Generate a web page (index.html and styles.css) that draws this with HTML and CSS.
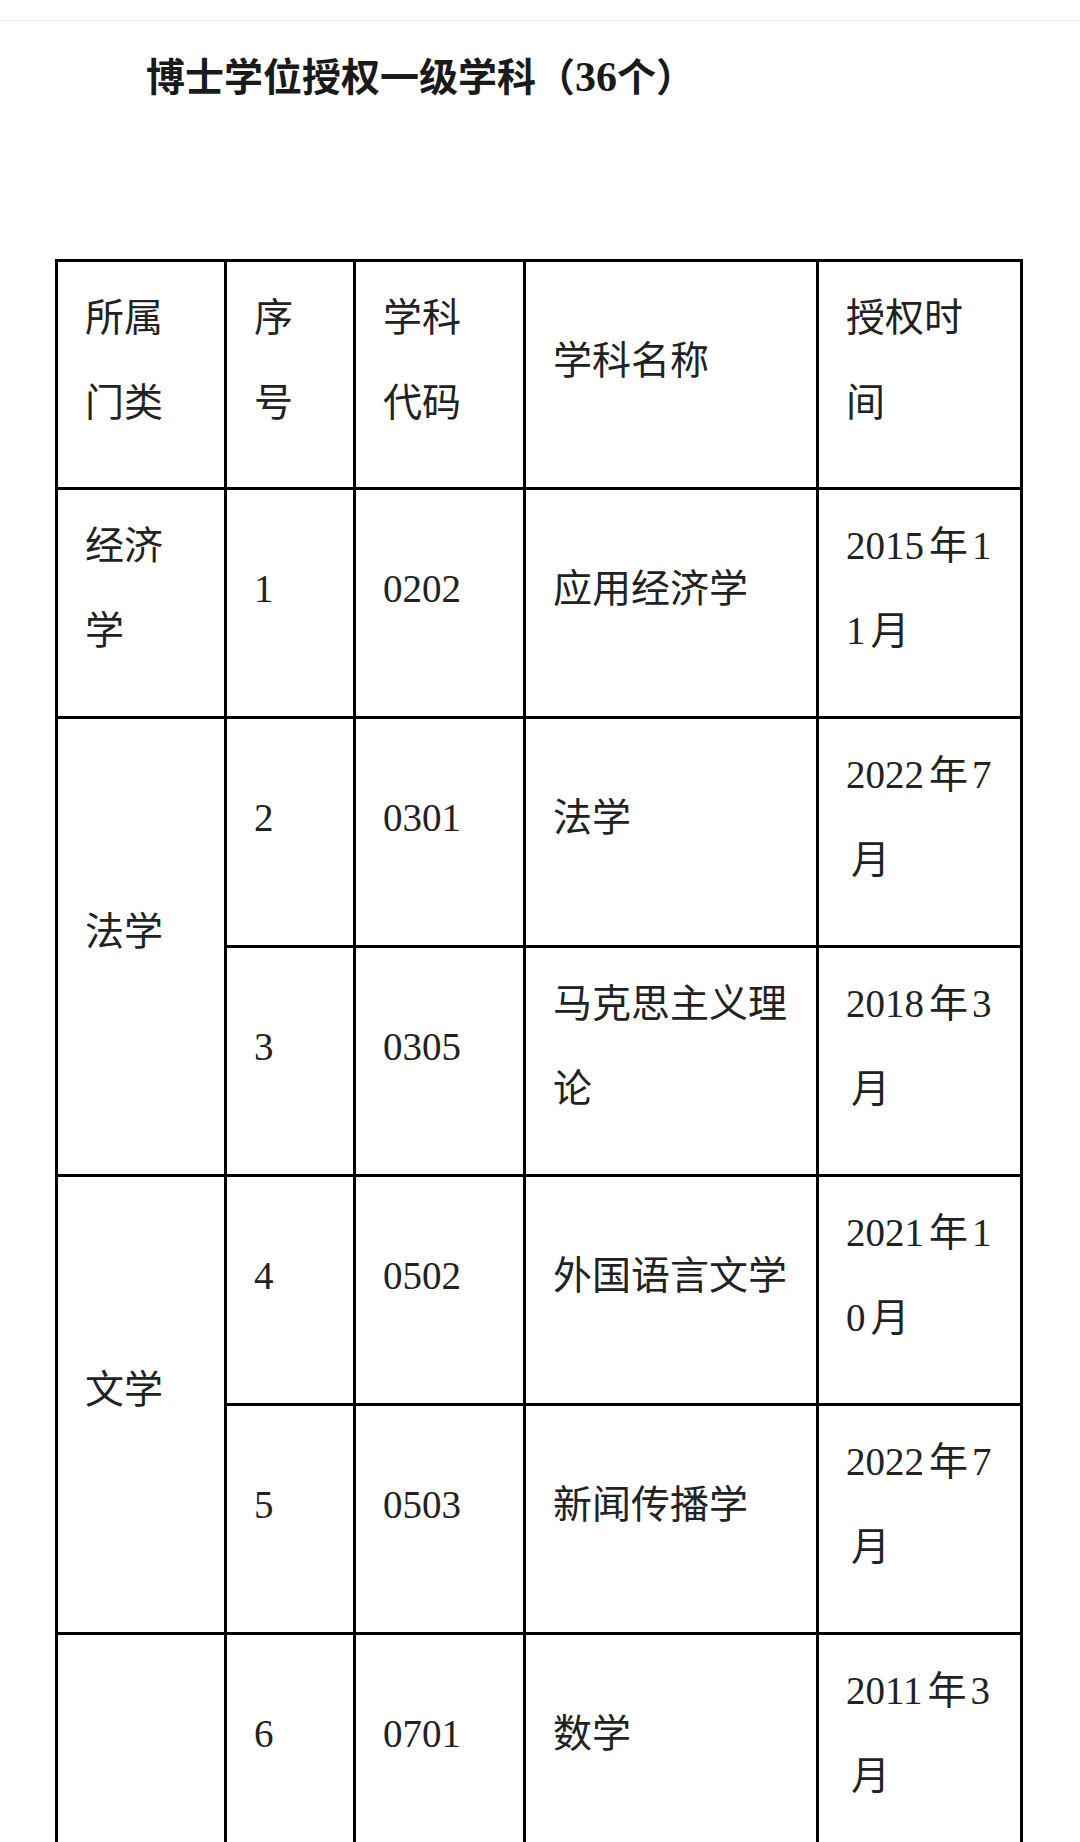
FILE: index.html
```html
<!DOCTYPE html>
<html lang="zh-CN">
<head>
<meta charset="utf-8">
<title>博士学位授权一级学科</title>
<link rel="stylesheet" href="styles.css">
</head>
<body>
<div class="topbar"></div>
<article class="article">
  <h2 class="title">博士学位授权一级学科（<span class="title-num">36</span>个）</h2>
  <table class="grid">
    <colgroup>
      <col class="c-cat">
      <col class="c-no">
      <col class="c-code">
      <col class="c-name">
      <col class="c-date">
    </colgroup>
    <tbody>
      <tr class="head-row">
        <td>所属门类</td>
        <td>序号</td>
        <td>学科代码</td>
        <td>学科名称</td>
        <td>授权时间</td>
      </tr>
      <tr>
        <td>经济学</td>
        <td>1</td>
        <td>0202</td>
        <td>应用经济学</td>
        <td>2015<span class="cj">年</span>11<span class="cj">月</span></td>
      </tr>
      <tr>
        <td rowspan="2">法学</td>
        <td>2</td>
        <td>0301</td>
        <td>法学</td>
        <td>2022<span class="cj">年</span>7<span class="cj">月</span></td>
      </tr>
      <tr>
        <td>3</td>
        <td>0305</td>
        <td>马克思主义理论</td>
        <td>2018<span class="cj">年</span>3<span class="cj">月</span></td>
      </tr>
      <tr>
        <td rowspan="2">文学</td>
        <td>4</td>
        <td>0502</td>
        <td>外国语言文学</td>
        <td>2021<span class="cj">年</span>10<span class="cj">月</span></td>
      </tr>
      <tr>
        <td>5</td>
        <td>0503</td>
        <td>新闻传播学</td>
        <td>2022<span class="cj">年</span>7<span class="cj">月</span></td>
      </tr>
      <tr>
        <td rowspan="3">理学</td>
        <td>6</td>
        <td>0701</td>
        <td>数学</td>
        <td>2011<span class="cj">年</span>3<span class="cj">月</span></td>
      </tr>
      <tr>
        <td>7</td>
        <td>0702</td>
        <td>物理学</td>
        <td>2011<span class="cj">年</span>3<span class="cj">月</span></td>
      </tr>
      <tr>
        <td>8</td>
        <td>0703</td>
        <td>化学</td>
        <td>2011<span class="cj">年</span>3<span class="cj">月</span></td>
      </tr>
    </tbody>
  </table>
</article>
</body>
</html>
```
FILE: styles.css
```css
html, body {
  margin: 0;
  padding: 0;
  background: #ffffff;
}

body {
  font-family: "Liberation Serif", "Noto Sans CJK SC", serif;
  color: #222222;
}

.topbar {
  height: 20px;
  border-bottom: 1px solid #ebebeb;
}

.article {
  padding: 34px 0 0 55px;
}

.title {
  margin: 0 0 0 91px;
  font-size: 39px;
  line-height: 45px;
  font-weight: bold;
  color: #1a1a1a;
}

.title-num {
  font-size: 42px;
}

.grid {
  margin-top: 159px;
  width: 968px;
  table-layout: fixed;
  border-collapse: collapse;
  font-size: 39px;
  line-height: 85px;
}

.c-cat { width: 169px; }
.c-no { width: 129px; }
.c-code { width: 170px; }
.c-name { width: 293px; }
.c-date { width: 204px; }

.grid td {
  border: 3px solid #000000;
  padding: 13px 25px 43px 27px;
  vertical-align: middle;
  text-align: left;
  word-break: break-all;
}

.grid .head-row td {
  padding-bottom: 42px;
}

.cj {
  margin: 0 4px 0 5px;
}
```
